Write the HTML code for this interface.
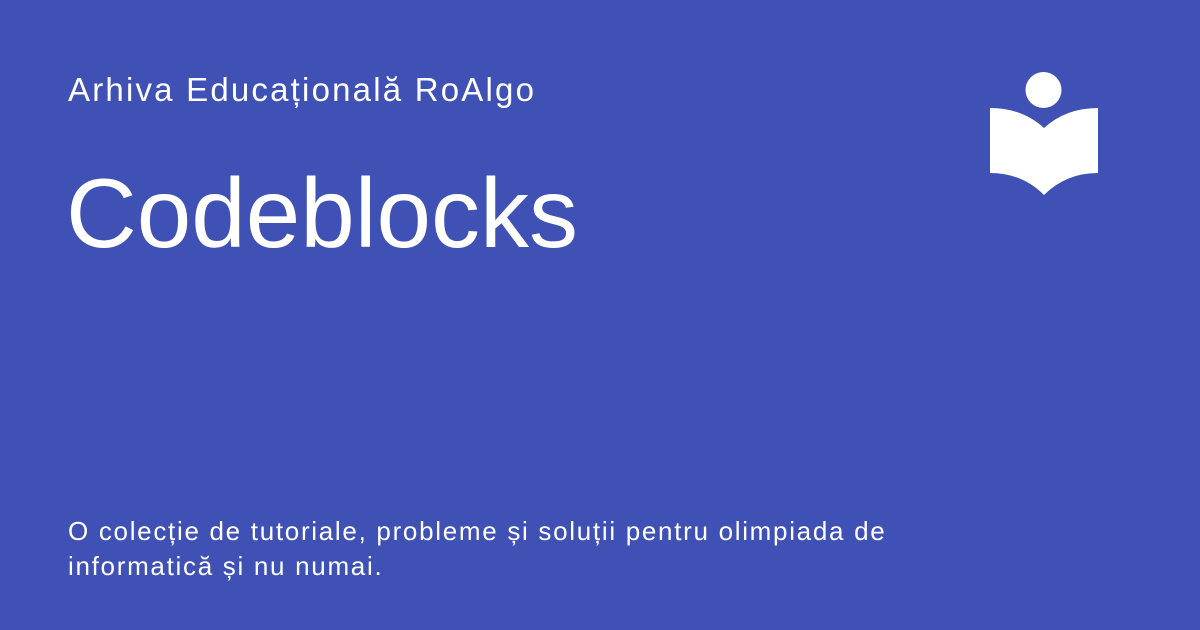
<!DOCTYPE html>
<html><head><meta charset="utf-8"><style>
html,body{margin:0;padding:0}
body{width:1200px;height:630px;background:#3f51b5;position:relative;overflow:hidden;font-family:"Liberation Sans",sans-serif;color:#fff}
.a{position:absolute;left:68px;top:70px;font-size:33px;line-height:40px;letter-spacing:2.2px}
.c{position:absolute;left:66px;top:158px;font-size:98px;line-height:110px}
.d{position:absolute;left:68px;top:514px;font-size:26px;line-height:35px;width:1000px;letter-spacing:1.7px}
svg{position:absolute;left:0;top:0}
</style></head><body>
<div class="a">Arhiva Educațională RoAlgo</div>
<div class="c">Codeblocks</div>
<div class="d">O colecție de tutoriale, probleme și soluții pentru olimpiada de<br>informatică și nu numai.</div>
<svg width="1200" height="630"><circle cx="1043.5" cy="90" r="18" fill="#fff"/>
<path d="M990 108 Q1022 108 1044 128 Q1066 108 1098 108 L1098 173 Q1066 173 1044 195 Q1022 173 990 173 Z" fill="#fff"/></svg>
</body></html>
